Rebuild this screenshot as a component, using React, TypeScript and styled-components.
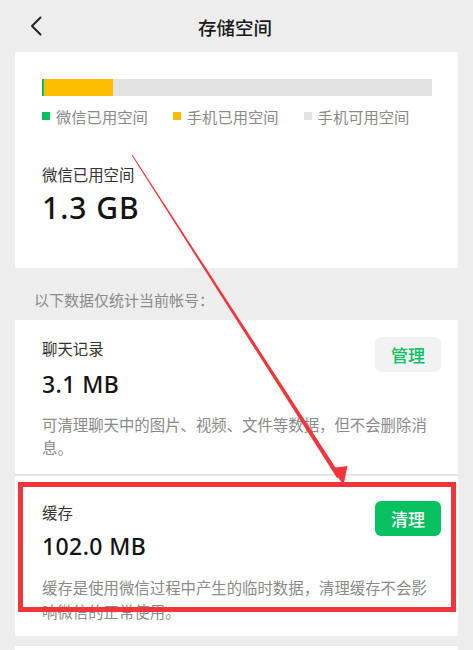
import React from "react";
import styled, { createGlobalStyle } from "styled-components";

const Global = createGlobalStyle`
  html, body { margin: 0; padding: 0; background: #ededed; }
  body { font-family: "Noto Sans CJK SC", "Noto Sans", sans-serif; -webkit-font-smoothing: antialiased; }
  * { box-sizing: border-box; }
`;

const Page = styled.div`
  position: relative;
  width: 473px;
  height: 650px;
  overflow: hidden;
  background: #ededed;
`;

const Header = styled.header`
  height: 52px;
  display: grid;
  grid-template-columns: 1fr auto 1fr;
  align-items: center;
  padding: 0 33px 0 30px;
`;

const Back = styled.button`
  justify-self: start;
  width: 16px;
  height: 24px;
  padding: 0;
  border: 0;
  background: none;
  display: flex;
  align-items: center;
`;

const Title = styled.h1`
  margin: 0;
  font-size: 18.5px;
  font-weight: 500;
  color: #191919;
  line-height: 24px;
  margin-top: 2px;
`;

const Main = styled.main`
  padding: 0 15px;
  display: flex;
  flex-direction: column;
`;

const Card = styled.section<{ $pt: number; $pb: number; $gapTop?: number }>`
  background: #fff;
  padding: ${(p) => p.$pt}px 17px ${(p) => p.$pb}px 27px;
  margin-top: ${(p) => p.$gapTop ?? 0}px;
  display: flex;
  flex-direction: column;
`;

const Bar = styled.div`
  width: 390px;
  height: 17px;
  background: #e3e3e3;
  display: flex;
`;

const Seg = styled.div<{ $color: string; $w: number }>`
  width: ${(p) => p.$w}px;
  background: ${(p) => p.$color};
`;

const Legend = styled.div`
  display: flex;
  gap: 25px;
  margin-top: 9px;
`;

const LegendItem = styled.div`
  display: flex;
  align-items: center;
  gap: 6px;
  font-size: 15.3px;
  line-height: 22px;
  color: #8a8a8a;
`;

const Dot = styled.span<{ $color: string }>`
  width: 8px;
  height: 8px;
  background: ${(p) => p.$color};
`;

const Label = styled.div<{ $mt?: number }>`
  font-size: 15.4px;
  line-height: 22px;
  color: #333;
  margin-top: ${(p) => p.$mt ?? 0}px;
`;

const Amount = styled.div<{ $size: number; $lh: number; $mt: number; $ls: number }>`
  font-family: "Noto Sans", Roboto, sans-serif;
  font-weight: 500;
  font-size: ${(p) => p.$size}px;
  line-height: ${(p) => p.$lh}px;
  color: #141414;
  margin-top: ${(p) => p.$mt}px;
  letter-spacing: ${(p) => p.$ls}px;
`;

const Note = styled.div`
  padding: 21px 19px 9px;
  font-size: 15px;
  line-height: 22px;
  color: #8a8a8a;
`;

const Row = styled.div`
  display: flex;
  justify-content: space-between;
  align-items: flex-start;
`;

const Info = styled.div`
  display: flex;
  flex-direction: column;
`;

const Action = styled.button<{ $primary?: boolean }>`
  width: 66px;
  height: 35px;
  border: 0;
  border-radius: 6px;
  font-family: inherit;
  font-size: 17px;
  font-weight: 500;
  background: ${(p) => (p.$primary ? "#07c160" : "#f2f2f2")};
  color: ${(p) => (p.$primary ? "#fff" : "#07c160")};
  padding: 0;
`;

const Desc = styled.p<{ $lh: number; $mt: number }>`
  margin: ${(p) => p.$mt}px 0 0;
  padding-right: 6px;
  font-size: 15.4px;
  line-height: ${(p) => p.$lh}px;
  color: #8a8a8a;
`;

const Divider = styled.div`
  height: 2px;
  background: #e4e4e4;
`;

const Overlay = styled.svg`
  position: absolute;
  left: 0;
  top: 0;
  pointer-events: none;
`;

export default function App() {
  const x0 = 132, y0 = 155, x1 = 339, y1 = 477;
  const dx = x1 - x0, dy = y1 - y0;
  const len = Math.hypot(dx, dy);
  const px = dy / len, py = -dx / len;
  const w0 = 0.5, w1 = 2.2;
  const shaft = [
    [x0 + px * w0, y0 + py * w0],
    [x1 + px * w1, y1 + py * w1],
    [x1 - px * w1, y1 - py * w1],
    [x0 - px * w0, y0 - py * w0],
  ]
    .map((p) => p.join(","))
    .join(" ");

  return (
    <Page>
      <Global />
      <Header>
        <Back aria-label="返回">
          <svg width="12" height="20" viewBox="0 0 12 20">
            <path d="M10.5 1.5 L2 10 L10.5 18.5" fill="none" stroke="#222" strokeWidth="2" strokeLinecap="round" strokeLinejoin="round" />
          </svg>
        </Back>
        <Title>存储空间</Title>
        <span />
      </Header>
      <Main>
        <Card $pt={27} $pb={41}>
          <Bar>
            <Seg $color="#07c160" $w={2} />
            <Seg $color="#fcbd00" $w={69} />
          </Bar>
          <Legend>
            <LegendItem><Dot $color="#07c160" />微信已用空间</LegendItem>
            <LegendItem><Dot $color="#fcbd00" />手机已用空间</LegendItem>
            <LegendItem><Dot $color="#e3e3e3" />手机可用空间</LegendItem>
          </Legend>
          <Label $mt={36}>微信已用空间</Label>
          <Amount $size={30} $lh={38} $mt={4} $ls={1}>1.3 GB</Amount>
        </Card>
        <Note>以下数据仅统计当前帐号：</Note>
        <Card $pt={17} $pb={15}>
          <Row>
            <Info>
              <Label>聊天记录</Label>
              <Amount $size={23} $lh={34} $mt={8} $ls={0.4}>3.1 MB</Amount>
            </Info>
            <Action>管理</Action>
          </Row>
          <Desc $lh={23} $mt={12}>可清理聊天中的图片、视频、文件等数据，但不会删除消息。</Desc>
        </Card>
        <Divider />
        <Card $pt={25} $pb={13}>
          <Row>
            <Info>
              <Label>缓存</Label>
              <Amount $size={23} $lh={34} $mt={6} $ls={0.4}>102.0 MB</Amount>
            </Info>
            <Action $primary>清理</Action>
          </Row>
          <Desc $lh={24} $mt={12}>缓存是使用微信过程中产生的临时数据，清理缓存不会影响微信的正常使用。</Desc>
        </Card>
        <Card $pt={10} $pb={10} $gapTop={10} />
      </Main>
      <Overlay width="473" height="650" viewBox="0 0 473 650">
        <polygon points={shaft} fill="#f2353a" />
        <polygon points="343.5,485 331.5,468 347.5,466" fill="#f2353a" />
        <rect x="20.5" y="484.5" width="433" height="125" fill="none" stroke="#f2353a" strokeWidth="5" />
      </Overlay>
    </Page>
  );
}
